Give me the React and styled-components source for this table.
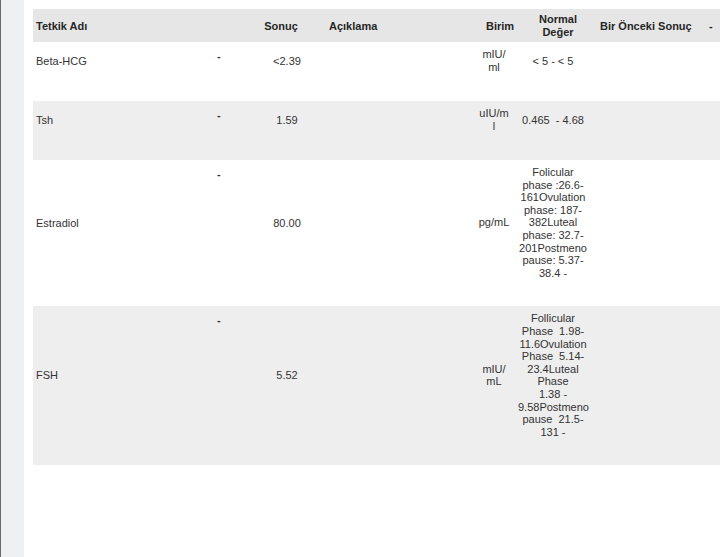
import React from 'react'
import styled, { createGlobalStyle } from 'styled-components'

const GlobalStyle = createGlobalStyle`
  html, body {
    margin: 0;
    padding: 0;
    background: #ffffff;
    overflow: hidden;
  }
  body {
    font-family: "Liberation Sans", Arial, sans-serif;
  }
`

const COLUMNS = '172px 49px 66px 150px 48px 74px 108px 1fr'

const tests = [
  {
    name: 'Beta-HCG',
    result: '<2.39',
    unit: ['mIU/', 'ml'],
    range: ['< 5 - < 5'],
    shade: false,
  },
  {
    name: 'Tsh',
    result: '1.59',
    unit: ['uIU/m', 'l'],
    range: ['0.465  - 4.68'],
    shade: true,
  },
  {
    name: 'Estradiol',
    result: '80.00',
    unit: ['pg/mL'],
    range: [
      'Folicular',
      'phase :26.6-',
      '161Ovulation',
      'phase: 187-',
      '382Luteal',
      'phase: 32.7-',
      '201Postmeno',
      'pause: 5.37-',
      '38.4 -',
    ],
    shade: false,
  },
  {
    name: 'FSH',
    result: '5.52',
    unit: ['mIU/', 'mL'],
    range: [
      'Follicular',
      'Phase  1.98-',
      '11.6Ovulation',
      'Phase  5.14-',
      '23.4Luteal',
      'Phase',
      '1.38 -',
      '9.58Postmeno',
      'pause  21.5-',
      '131 -',
    ],
    shade: true,
  },
]

export default function App() {
  return (
    <>
      <GlobalStyle />
      <Page>
        <EdgeStrip />
        <Sheet>
          <Table>
            <HeaderRow>
              <HeadCell $pad="0 0 0 3px">Tetkik Adı</HeadCell>
              <HeadCell />
              <HeadCell $align="center" $pad="0 12px 0 0">Sonuç</HeadCell>
              <HeadCell $pad="0 0 0 9px">Açıklama</HeadCell>
              <HeadCell $align="center" $pad="0 0 0 12px">Birim</HeadCell>
              <HeadCell $align="center" $pad="0 0 0 6px">
                <Line>Normal</Line>
                <Line>Değer</Line>
              </HeadCell>
              <HeadCell $pad="0 0 0 8px">Bir Önceki Sonuç</HeadCell>
              <HeadCell $pad="0 0 0 9px">-</HeadCell>
            </HeaderRow>
            {tests.map((t) => (
              <Row key={t.name} $shade={t.shade}>
                <Cell $pad="0 0 0 3px">{t.name}</Cell>
                <Dash>-</Dash>
                <Cell $align="center">{t.result}</Cell>
                <Cell />
                <Cell $align="center">
                  {t.unit.map((u) => (
                    <Line key={u}>{u}</Line>
                  ))}
                </Cell>
                <Cell $align="center" $pad="0 4px 0 0">
                  {t.range.map((r, i) => (
                    <Line key={i}>{r}</Line>
                  ))}
                </Cell>
                <Cell />
                <Cell />
              </Row>
            ))}
          </Table>
        </Sheet>
      </Page>
    </>
  )
}

const Page = styled.div`
  display: flex;
  width: 720px;
  height: 557px;
  background: #ffffff;
`

const EdgeStrip = styled.div`
  width: 23px;
  flex: none;
  border-left: 1px solid #6a6a6a;
  background: #eef0f1;
`

const Sheet = styled.div`
  flex: 1;
  padding: 9px 0 0 9px;
  overflow: hidden;
`

const Table = styled.div`
  display: flex;
  flex-direction: column;
  color: #333333;
  font-size: 11px;
`

const HeaderRow = styled.div`
  display: grid;
  grid-template-columns: ${COLUMNS};
  align-items: center;
  height: 33px;
  background: #e6e6e6;
  color: #262626;
  font-weight: bold;
`

const HeadCell = styled.div`
  text-align: ${({ $align }) => $align || 'left'};
  padding: ${({ $pad }) => $pad || '0'};
  white-space: nowrap;
`

const Row = styled.div`
  display: grid;
  grid-template-columns: ${COLUMNS};
  align-items: center;
  min-height: 26px;
  padding: 6px 0 27px;
  background: ${({ $shade }) => ($shade ? '#eeeeee' : '#ffffff')};
`

const Cell = styled.div`
  text-align: ${({ $align }) => $align || 'left'};
  padding: ${({ $pad }) => $pad || '0'};
  white-space: pre;
`

const Dash = styled.div`
  align-self: start;
  padding: 2px 0 0 12px;
  font-weight: bold;
`

const Line = styled.div`
  line-height: 12.6px;
`
